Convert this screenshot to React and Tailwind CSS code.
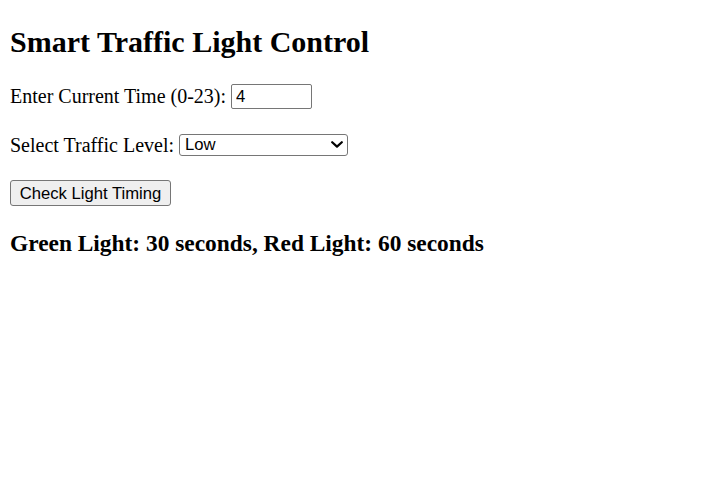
import { useState } from 'react'

export default function App() {
  const [time, setTime] = useState('4')
  const [level, setLevel] = useState('Low')

  return (
    <div className="min-h-screen bg-white px-[10px] text-black" style={{ fontFamily: '"Liberation Serif", "Times New Roman", serif' }}>
      <div className="pt-[25px]">
        <h1 className="text-[30px] leading-[34px] font-bold">Smart Traffic Light Control</h1>

        <div className="mt-[25px] flex h-[25px] items-center">
          <label className="text-[20px] leading-[23px] whitespace-pre">Enter Current Time (0-23): </label>
          <input
            type="number"
            value={time}
            onChange={(e) => setTime(e.target.value)}
            className="h-[25px] w-[81px] appearance-none rounded-[2px] border border-[#767676] bg-white pl-[4px] text-[16.67px] leading-[19px] outline-none [&::-webkit-inner-spin-button]:appearance-none"
            style={{ fontFamily: '"Liberation Sans", Arial, sans-serif' }}
          />
        </div>

        <div className="mt-[25px] flex h-[22px] items-center">
          <label className="text-[20px] leading-[23px] whitespace-pre">Select Traffic Level: </label>
          <div className="relative">
            <select
              value={level}
              onChange={(e) => setLevel(e.target.value)}
              className="h-[22px] w-[169px] appearance-none rounded-[3px] border border-[#767676] bg-white pl-[5px] text-[16.67px] leading-[19px] outline-none"
              style={{ fontFamily: '"Liberation Sans", Arial, sans-serif' }}
            >
              <option>Low</option>
              <option>Medium</option>
              <option>High</option>
            </select>
            <svg className="pointer-events-none absolute right-[5px] top-[8px]" width="12" height="7" viewBox="0 0 12 7" fill="none">
              <path d="M1.2 1.2 L6 5.6 L10.8 1.2" stroke="#000" strokeWidth="2.2" strokeLinecap="round" strokeLinejoin="round" />
            </svg>
          </div>
        </div>

        <button
          className="mt-[24px] block h-[26px] w-[161px] rounded-[3px] border border-[#767676] bg-[#efefef] text-[16.67px] leading-[19px]"
          style={{ fontFamily: '"Liberation Sans", Arial, sans-serif' }}
        >
          Check Light Timing
        </button>

        <h3 className="mt-[24px] text-[23.4px] leading-[27px] font-bold">Green Light: 30 seconds, Red Light: 60 seconds</h3>
      </div>
    </div>
  )
}
